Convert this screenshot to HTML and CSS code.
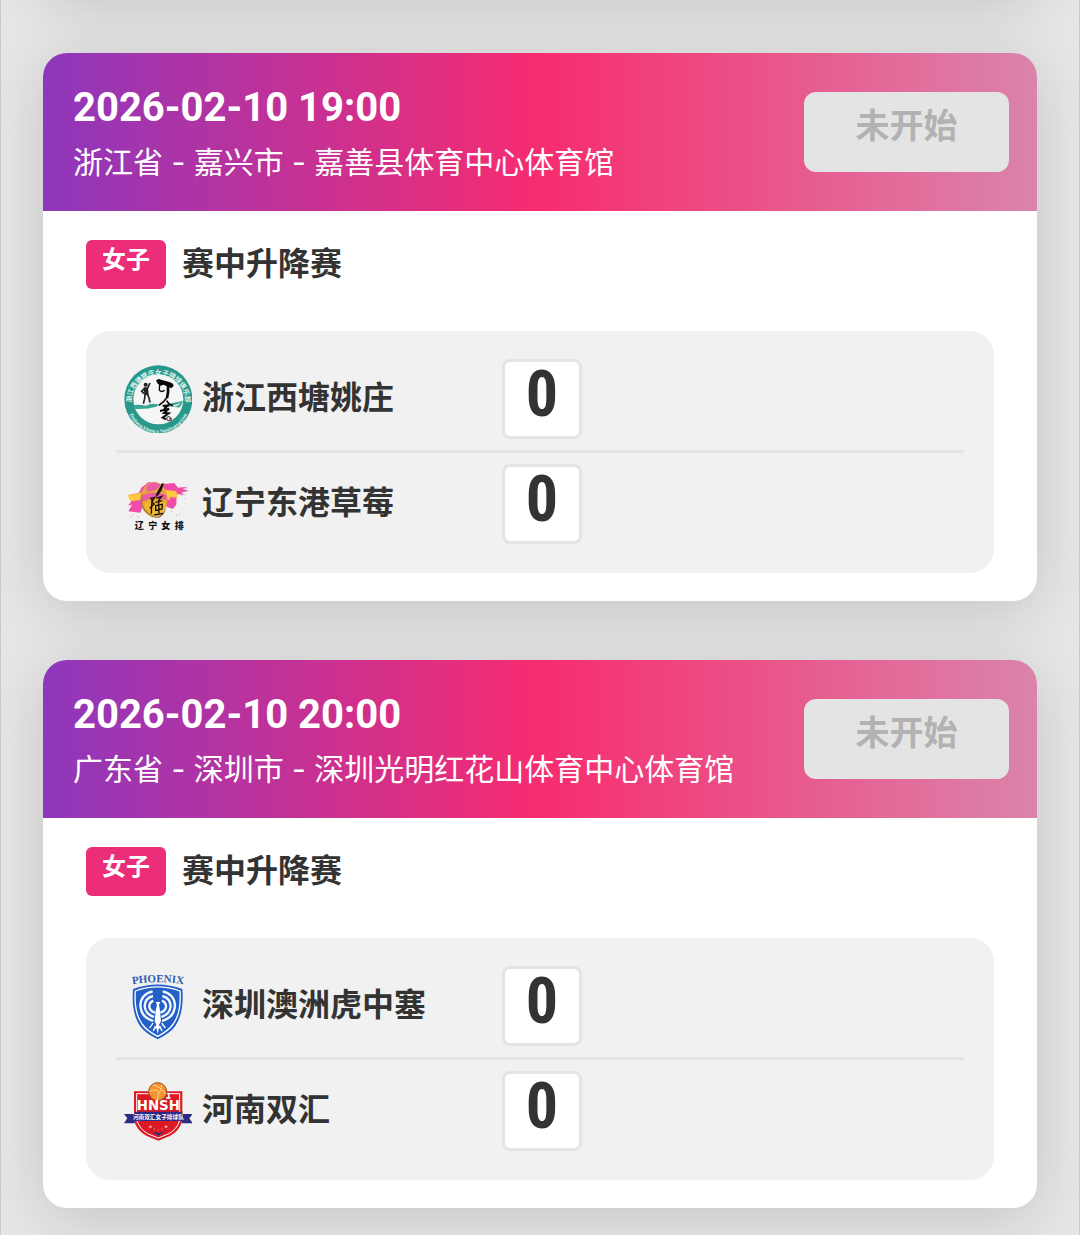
FILE: index.html
```html
<!DOCTYPE html>
<html lang="zh-CN">
<head>
  <meta charset="UTF-8">
  <meta name="viewport" content="width=device-width, initial-scale=1.0">
  <title>赛程</title>
  <link rel="stylesheet" href="styles.css">
</head>
<body>
  <main class="match-list">

    <article class="card">
      <header class="card-header">
        <div class="info">
          <h2 class="time">2026-02-10 19:00</h2>
          <p class="place">浙江省 - 嘉兴市 - 嘉善县体育中心体育馆</p>
        </div>
        <button type="button" class="status" disabled>未开始</button>
      </header>
      <div class="card-body">
        <div class="event">
          <span class="tag">女子</span>
          <h3 class="event-name">赛中升降赛</h3>
        </div>
        <div class="teams">
          <div class="team">
            <svg class="logo" viewBox="42 30 204 204" aria-hidden="true">
              <defs>
                <path id="ring-top" d="M66 158 A81 81 0 1 1 224 158"/>
                <path id="ring-bottom" d="M52 158 A95 95 0 0 0 238 158"/>
              </defs>
              <circle cx="145" cy="133" r="102" fill="#27988a"/>
              <circle cx="145" cy="133" r="75" fill="#f5f6f5"/>
              <path d="M71 150 Q92 148 108 152 Q126 142 148 150 L139 155 Q112 164 74 162Z" fill="#3aa596"/>
              <path d="M164 152 Q184 143 219 138 Q216 150 207 158 Q188 151 164 158Z" fill="#3aa596"/>
              <path d="M172 151 Q194 154 211 143 Q207 154 186 154Z" fill="#f5f6f5"/>
              <circle cx="107" cy="89" r="6" fill="#1d2423"/>
              <path d="M101 96 l13 2 2 22 -13 1z" fill="#1d2423"/>
              <path d="M112 101 l8 -17 M104 100 l-9 9 7 7 M112 117 l5 12 3 14 M105 118 l-1 13 -4 15" fill="none" stroke="#1d2423" stroke-width="5"/>
              <path d="M138 77 Q145 69 153 74 L175 80 Q190 83 191 92 L184 100 170 94 161 89 152 92 144 87z" fill="#080808"/>
              <path d="M149 88 l-1 18 q7 7 16 0" fill="none" stroke="#080808" stroke-width="4"/>
              <path d="M174 93 Q176 112 171 129" fill="none" stroke="#080808" stroke-width="8"/>
              <path d="M171 127 Q162 142 147 151 M170 137 Q177 150 189 152" fill="none" stroke="#080808" stroke-width="5"/>
              <path d="M158 153 l16 -2 -12 11 M150 168 l27 -7 -15 13 14 1 -18 13 10 5" fill="none" stroke="#080808" stroke-width="6"/>
              <circle cx="176" cy="191" r="6" fill="none" stroke="#1d2423" stroke-width="3"/>
              <path d="M178 189 h8 v8 h-8z" fill="#b9433c"/>
              <text class="ring-cn"><textPath href="#ring-top" startOffset="50%">浙江西塘姚庄女子排球俱乐部</textPath></text>
              <text class="ring-en"><textPath href="#ring-bottom" startOffset="50%">Zhejiang Xitang x Yaozhuang Club</textPath></text>
            </svg>
            <span class="name">浙江西塘姚庄</span>
            <span class="score">0</span>
          </div>
          <div class="team">
            <svg class="logo" viewBox="42 15 204 204" aria-hidden="true">
              <path d="M53 91 L87 83 94 68 116 51 144 56 160 57 193 54 204 68 233 65 218 72 236 77 213 83 226 89 200 88 199 119 188 132 163 122 98 124 91 143 55 139 66 119 54 122 66 106z" fill="#ef4da8"/>
              <path d="M53 91 L96 83 92 105 61 109z M143 72 L199 79 204 99 181 96 178 106 145 94z" fill="#ffc83d"/>
              <ellipse cx="132" cy="103" rx="40" ry="52" fill="#e9a33c"/>
              <path d="M113 60 Q132 45 151 59 Q146 76 117 80 Q102 77 113 60Z M94 91 Q126 76 169 89 L171 105 Q126 92 97 111Z" fill="#ec5ba5"/>
              <path d="M96 118 Q129 102 169 113 Q163 146 137 156 Q108 151 96 118Z" fill="#edb72f"/>
              <path d="M96 88 Q86 135 132 156" fill="none" stroke="#b77b42" stroke-width="5"/>
              <path d="M131 157 Q154 158 169 127 Q160 166 131 157Z" fill="#9b6c35"/>
              <path d="M157 56 Q155 76 139 94 M120 101 l14 -4 -8 14 7 6 -14 13 M126 98 l-2 48 M139 100 l16 -6 -10 14 M136 112 l21 -5 M146 107 l1 38 M137 122 l20 -4 -1 14 -19 4z M133 150 l27 -5" fill="none" stroke="#18100d" stroke-width="4"/>
              <path d="M155 57 l7 -3 -8 24 -14 15 -2 -5z" fill="#111"/>
              <path d="M62 154 h3 M70 148 h2 M82 156 h4 M184 139 h3 M198 151 h3 M207 149 h2 M213 92 h3 M223 101 h2 M223 69 h8" stroke="#ef81bd" stroke-width="3"/>
              <text class="ln-text" x="74 115 154 194" y="193">辽宁女排</text>
            </svg>
            <span class="name">辽宁东港草莓</span>
            <span class="score">0</span>
          </div>
        </div>
      </div>
    </article>

    <article class="card">
      <header class="card-header">
        <div class="info">
          <h2 class="time">2026-02-10 20:00</h2>
          <p class="place">广东省 - 深圳市 - 深圳光明红花山体育中心体育馆</p>
        </div>
        <button type="button" class="status" disabled>未开始</button>
      </header>
      <div class="card-body">
        <div class="event">
          <span class="tag">女子</span>
          <h3 class="event-name">赛中升降赛</h3>
        </div>
        <div class="teams">
          <div class="team">
            <svg class="logo" viewBox="42 36 204 204" aria-hidden="true">
              <defs>
                <path id="phoenix-arc" d="M60 74 Q144 60 228 74"/>
              </defs>
              <text class="px-text"><textPath href="#phoenix-arc" startOffset="50%">PHOENIX</textPath></text>
              <path d="M69 87 Q143 60 217 87 Q223 158 196 198 Q180 220 143 238 Q106 220 90 198 Q63 158 69 87Z" fill="#225fc7"/>
              <path d="M76 93 Q143 68 210 93 Q215 155 190 192 Q175 213 143 229 Q111 213 96 192 Q71 155 76 93Z" fill="none" stroke="#fff" stroke-width="4"/>
              <g fill="none" stroke="#f5f8ff" stroke-width="7">
                <path d="M128 94 Q93 102 91 136 Q93 172 130 183"/>
                <path d="M129 108 Q105 114 104 139 Q107 163 132 171"/>
                <path d="M130 122 Q117 128 118 141 Q120 153 135 158"/>
                <path d="M158 94 Q193 102 195 136 Q193 172 156 183"/>
                <path d="M157 108 Q181 114 182 139 Q179 163 154 171"/>
                <path d="M156 122 Q169 128 168 141 Q166 153 151 158"/>
              </g>
              <path d="M137 126 l14 0 -4 8 3 18 3 32 -6 10 6 15 -6 -5 -4 18 -4 -18 -7 5 7 -15 -5 -10 3 -32 4 -18z" fill="#fff"/>
              <path d="M119 204 l10 -15 M166 204 l-11 -15 M130 213 l6 -14 M156 213 l-6 -14" stroke="#fff" stroke-width="4"/>
            </svg>
            <span class="name">深圳澳洲虎中塞</span>
            <span class="score">0</span>
          </div>
          <div class="team">
            <svg class="logo" viewBox="42 21 204 204" aria-hidden="true">
              <path d="M72 64 H217 V153 Q207 184 181 197 L145 212 109 197 Q83 184 72 153Z" fill="#dc1925"/>
              <path d="M80 71 H209 V151 Q201 178 177 191 L145 204 113 191 Q90 178 80 151Z" fill="none" stroke="#fff" stroke-width="3"/>
              <path d="M168 84 h14 M176 68 v16" stroke="#fff" stroke-width="5"/>
              <circle cx="143" cy="65" r="27" fill="#f7922f" stroke="#8d4a24" stroke-width="3"/>
              <path d="M118 65 Q139 54 147 67 L142 90 M128 45 Q143 46 155 58 L167 72 M147 67 Q156 62 155 44" fill="none" stroke="#fbd9a0" stroke-width="3"/>
              <path d="M119 179 Q145 199 172 179 L145 197Z" fill="#23358d"/>
              <path d="M42 132 H74 V125 H217 V132 H248 L238 145 248 160 H216 V153 H74 V160 H42 L52 145Z" fill="#292b86"/>
              <text class="hn-text" x="145" y="119">HNSH</text>
              <text class="hn-team" x="145" y="146">河南双汇女子排球队</text>
              <path d="M121 164 l2 4 4 0 -3 3 1 4 -4 -2 -4 2 1 -4 -3 -3 4 0z M168 164 l2 4 4 0 -3 3 1 4 -4 -2 -4 2 1 -4 -3 -3 4 0z" fill="#f3a0a1"/>
              <path d="M132 177 h3 M143 180 h3 M155 177 h3" stroke="#f3a0a1" stroke-width="3"/>
            </svg>
            <span class="name">河南双汇</span>
            <span class="score">0</span>
          </div>
        </div>
      </div>
    </article>

  </main>
</body>
</html>
```
FILE: styles.css
```css
* {
  box-sizing: border-box;
}
body {
  margin: 0;
  background: #e6e6e6;
  color: #333;
  font-family: Inter, "Noto Sans CJK SC", sans-serif;
}
h2, h3, p {
  margin: 0;
}
.match-list {
  display: flex;
  flex-direction: column;
  gap: 59px;
  padding: 0 42px 27px;
  border: solid #c9c9c9;
  border-width: 0 1px;
  overflow: hidden;
}
/* bottom edge of the card scrolled off above */
.match-list::before {
  content: "";
  height: 300px;
  margin-top: -306px;
  border-radius: 24px;
  box-shadow: 0 10px 60px rgba(0, 0, 0, 0.15);
}
.card {
  background: #fff;
  border-radius: 24px;
  box-shadow: 0 10px 60px rgba(0, 0, 0, 0.15);
}
.card-header {
  display: flex;
  justify-content: space-between;
  align-items: center;
  height: 158px;
  padding: 0 28px 0 30px;
  border-radius: 24px 24px 0 0;
  background: linear-gradient(90deg, #8e37bc, #f72c70 50%, #da84aa);
  color: #fff;
}
.time {
  padding-top: 6px;
  font-family: Roboto, sans-serif;
  font-size: 40px;
  line-height: 54px;
  font-weight: 700;
}
.place {
  font-size: 30px;
  line-height: 54px;
}
.status {
  width: 205px;
  height: 80px;
  padding: 0 0 18px;
  border: none;
  border-radius: 12px;
  background: #e4e4e4;
  color: #b2b2b2;
  font-family: inherit;
  font-size: 34px;
  font-weight: 700;
}

.card-body {
  padding: 29px 43px 28px;
}
.event {
  display: flex;
  gap: 16px;
  margin-bottom: 42px;
}
.tag {
  height: 49px;
  padding: 0 16px;
  border-radius: 6px;
  background: #ec2d77;
  color: #fff;
  font-size: 24px;
  line-height: 40px;
  font-weight: 700;
}
.event-name {
  font-size: 32px;
  line-height: 48px;
  font-weight: 700;
}

.teams {
  padding: 28px 30px 29px;
  border-radius: 24px;
  background: #f1f1f1;
}
.team {
  display: grid;
  grid-template-columns: 68px 290px 80px;
  column-gap: 10px;
  align-items: center;
  padding-left: 8px;
}
.team + .team {
  margin-top: 11px;
  padding-top: 11px;
  border-top: 3px solid #e3e3e3;
}
.logo {
  width: 68px;
  height: 68px;
}
.name {
  padding-bottom: 8px;
  font-size: 32px;
  font-weight: 700;
}
.score {
  height: 80px;
  border: 3px solid #e4e4e4;
  border-radius: 8px;
  background: #fff;
  font-family: "Liberation Sans Narrow", "Roboto Condensed", Roboto, sans-serif;
  font-size: 64px;
  line-height: 66px;
  font-weight: 700;
  text-align: center;
}

/* lettering inside the club logos */
.ring-cn, .ring-en, .ln-text, .px-text, .hn-text, .hn-team {
  font-weight: 700;
}
.ring-cn {
  fill: #e2f3ef;
  font-size: 20px;
  text-anchor: middle;
}
.ring-en {
  fill: #e2f3ef;
  font-size: 13px;
  text-anchor: middle;
}
.ln-text {
  fill: #111;
  font-size: 27px;
  font-weight: 900;
}
.px-text {
  fill: #2c5fae;
  font-family: "Liberation Serif", serif;
  font-size: 33px;
  text-anchor: middle;
}
.hn-text {
  fill: #fff;
  font-family: "DejaVu Sans", sans-serif;
  font-size: 40px;
  text-anchor: middle;
}
.hn-team {
  fill: #fff;
  font-size: 17px;
  text-anchor: middle;
}
```
